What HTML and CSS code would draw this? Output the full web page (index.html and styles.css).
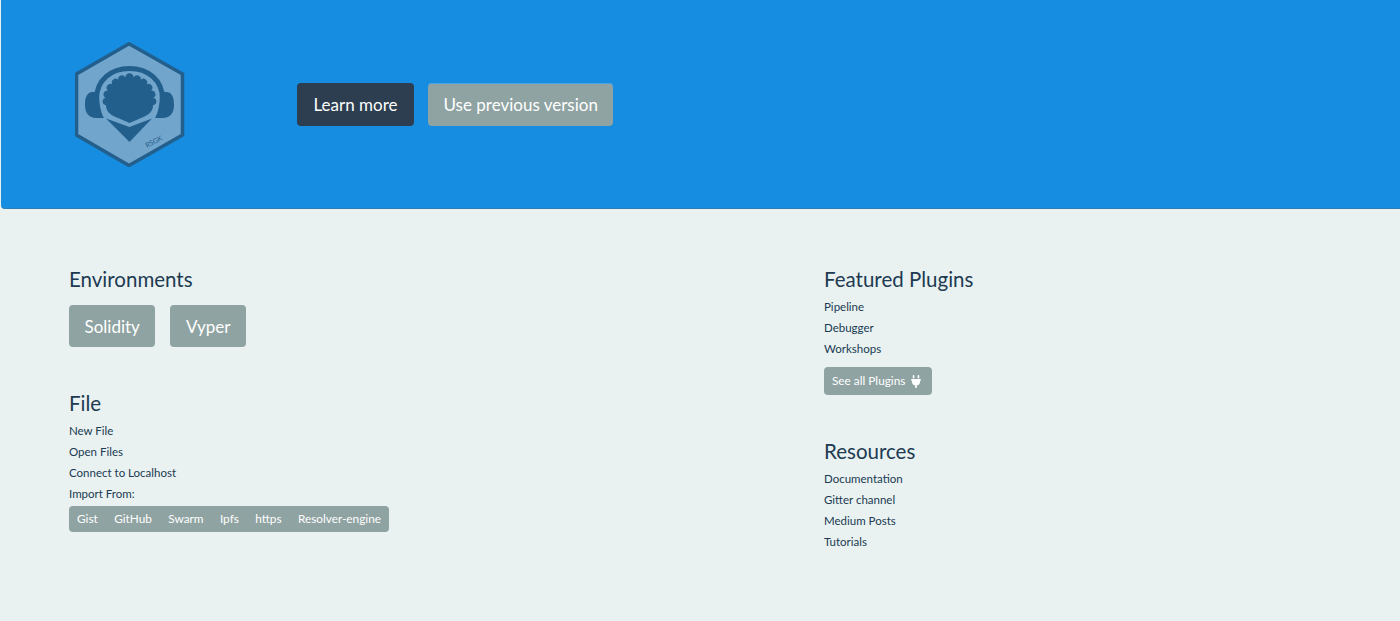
FILE: index.html
```html
<!DOCTYPE html>
<html lang="en">
<head>
<meta charset="utf-8">
<title>Home</title>
<link rel="stylesheet" href="styles.css">
</head>
<body>
<header class="hero">
  <svg class="logo" viewBox="0 0 110 125" width="110" height="125" aria-label="Remix logo">
    <polygon class="hex" points="54,1.800 107.500,32 107.500,93 54,123.500 1.500,93 1.500,32"/>
    <path class="band" d="M21.500 57C21.500 38 36 26.500 54.500 26.500C73 26.500 87.500 38 87.500 57"/>
    <path class="dark" d="M17 50C11 51 10 57 10 63C10 71 14 76 21 76L29 76C26 71 24 62 24 50Z"/>
    <path class="dark" d="M92 50C98 51 99 57 99 63C99 71 95 76 88 76L80 76C83 71 85 62 85 50Z"/>
    <path class="dark" d="M30.900 63.200A3.800 3.800 0 0 1 30.700 55.700A3.800 3.800 0 0 1 32.900 48.500A3.800 3.800 0 0 1 37.200 42.300A3.800 3.800 0 0 1 43.200 37.800A3.800 3.800 0 0 1 50.300 35.400A4.200 4.200 0 0 1 58.700 35.400A3.800 3.800 0 0 1 65.800 37.800A3.800 3.800 0 0 1 71.800 42.300A3.800 3.800 0 0 1 76.100 48.500A3.800 3.800 0 0 1 78.300 55.700A3.800 3.800 0 0 1 78.100 63.200C78 71 71 74 66 76L54.500 81L43 76C38 74 31 71 30.900 63.200Z"/>
    <polygon class="dark" points="31,76.500 54.500,85 77,76.500 54.500,100"/>
    <text class="mark" x="72" y="106" transform="rotate(-28 72 106)">RSGK</text>
  </svg>
  <div class="hero-actions">
    <a class="btn btn-lg btn-dark" href="#">Learn more</a>
    <a class="btn btn-lg btn-grey" href="#">Use previous version</a>
  </div>
</header>
<main class="content">
  <div class="column">
    <section class="block block-env">
      <h4>Environments</h4>
      <div class="env-row">
        <a class="btn btn-lg btn-grey" href="#">Solidity</a>
        <a class="btn btn-lg btn-grey" href="#">Vyper</a>
      </div>
    </section>
    <section class="block">
      <h4>File</h4>
      <ul class="links">
        <li><a href="#">New File</a></li>
        <li><a href="#">Open Files</a></li>
        <li><a href="#">Connect to Localhost</a></li>
        <li>Import From:</li>
      </ul>
      <div class="import-group">
        <a href="#">Gist</a>
        <a href="#">GitHub</a>
        <a href="#">Swarm</a>
        <a href="#">Ipfs</a>
        <a href="#">https</a>
        <a href="#">Resolver-engine</a>
      </div>
    </section>
  </div>
  <div class="column">
    <section class="block block-plugins">
      <h4>Featured Plugins</h4>
      <ul class="links">
        <li><a href="#">Pipeline</a></li>
        <li><a href="#">Debugger</a></li>
        <li><a href="#">Workshops</a></li>
      </ul>
      <a class="btn btn-sm btn-grey" href="#">See all Plugins
        <svg class="plug" viewBox="0 0 384 512" width="10" height="13" aria-hidden="true"><path d="M320,32a32,32,0,0,0-64,0v96h64Zm48,128H16A16,16,0,0,0,0,176v32a16,16,0,0,0,16,16H32v32A160.07,160.07,0,0,0,160,412.8V512h64V412.8A160.07,160.07,0,0,0,352,256V224h16a16,16,0,0,0,16-16V176A16,16,0,0,0,368,160ZM128,32a32,32,0,0,0-64,0v96h64Z"/></svg>
      </a>
    </section>
    <section class="block">
      <h4>Resources</h4>
      <ul class="links">
        <li><a href="#">Documentation</a></li>
        <li><a href="#">Gitter channel</a></li>
        <li><a href="#">Medium Posts</a></li>
        <li><a href="#">Tutorials</a></li>
      </ul>
    </section>
  </div>
</main>
</body>
</html>
```
FILE: styles.css
```css
* { box-sizing: border-box; }
html, body { height: 100%; }
body {
  margin: 0;
  background: #e9f2f1;
  color: #203a52;
  font-family: Lato, "Liberation Sans", sans-serif;
  font-size: 11.500px;
  line-height: 18px;
  overflow: hidden;
}
a { color: inherit; text-decoration: none; }

.hero {
  height: 209px;
  margin-left: 1px;
  padding: 42px 0 0 74px;
  background: #168de0;
  border-bottom: 1px solid #2c7db8;
  border-bottom-left-radius: 4px;
  display: flex;
  align-items: flex-start;
}
.logo { flex: none; display: block; }
.hex { fill: #72a5cb; stroke: #235f8d; stroke-width: 3.500; }
.band { fill: none; stroke: #235f8d; stroke-width: 5; }
.dark { fill: #235f8d; }
.mark { fill: #235f8d; font-size: 7px; font-family: Lato, sans-serif; }
.hero-actions { display: flex; gap: 14px; margin: 41px 0 0 112px; }

.btn {
  display: inline-block;
  border-radius: 4px;
  color: #fff;
  white-space: nowrap;
}
.btn-lg { font-size: 17px; line-height: 21px; padding: 11px 15.500px; height: 43px; }
.btn-sm { font-size: 11.800px; line-height: 18px; padding: 5px 8px; height: 28px; display: inline-flex; align-items: center; gap: 6px; width: 108px; }
.btn-dark { background: #2c3e50; padding: 11px 16.500px; }
.btn-grey { background: #8fa3a2; }
.hero-actions .btn-grey { box-shadow: inset 0 1px #4aa3e6; }
.plug { fill: #fff; flex: none; }

.content {
  display: grid;
  grid-template-columns: 755px 1fr;
  padding: 57px 0 0 69px;
}
.block h4 { margin: 0 0 3px; font-size: 20.500px; font-weight: 400; line-height: 27px; }
.block-env { margin-bottom: 43px; }
.block-plugins { margin-bottom: 43px; }
.env-row { display: flex; gap: 15px; margin-top: 12px; }
.env-row .btn { height: 42px; }
.links { list-style: none; margin: 0; padding: 0; }
.links li { height: 21px; line-height: 21px; }
.links + .btn { margin-top: 8px; }
.import-group {
  display: inline-flex;
  gap: 16.400px;
  margin-top: 2px;
  height: 26px;
  padding: 4px 8px;
  background: #8fa3a2;
  border-radius: 4px;
  color: #fff;
  font-size: 11.800px;
}
```
